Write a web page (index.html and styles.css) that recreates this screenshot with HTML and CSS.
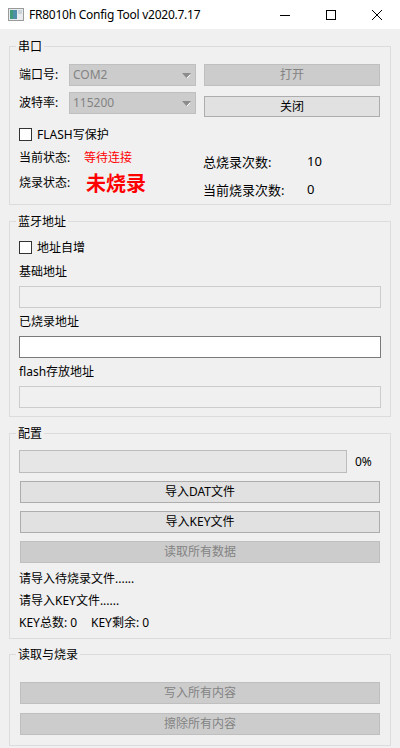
FILE: index.html
```html
<!DOCTYPE html>
<html lang="zh-CN">
<head>
  <meta charset="UTF-8">
  <meta name="viewport" content="width=device-width, initial-scale=1.0">
  <title>FR8010h Config Tool v2020.7.17</title>
  <link rel="stylesheet" href="styles.css">
</head>
<body>
  <div class="titlebar">
    <svg class="app-icon" width="16" height="13" viewBox="0 0 16 13">
      <rect x="0.5" y="0.5" width="15" height="12" fill="#e8ecef" stroke="#9a9a9a"/>
      <rect x="2" y="2" width="7" height="9" fill="#4d8fa8"/>
      <rect x="2" y="2" width="3" height="9" fill="#3f9a7a"/>
      <rect x="10" y="2" width="4" height="4" fill="#c9d3da"/>
    </svg>
    <span class="title">FR8010h Config Tool v2020.7.17</span>
    <div class="win-btns">
      <span class="win-btn">
        <svg width="10" height="10" viewBox="0 0 10 10"><path d="M0 5.5h10" stroke="#000" stroke-width="1"/></svg>
      </span>
      <span class="win-btn">
        <svg width="10" height="10" viewBox="0 0 10 10"><rect x="0.5" y="0.5" width="9" height="9" fill="none" stroke="#000"/></svg>
      </span>
      <span class="win-btn">
        <svg width="10" height="10" viewBox="0 0 10 10"><path d="M0 0L10 10M10 0L0 10" stroke="#000" stroke-width="1"/></svg>
      </span>
    </div>
  </div>

  <div class="main">
    <!-- 串口 -->
    <fieldset class="group g-serial">
      <legend>串口</legend>
      <div class="serial-grid">
        <span class="field-label">端口号:</span>
        <div class="combo">COM2<svg class="arrow" width="9" height="5" viewBox="0 0 9 5"><path d="M0 0h9L4.5 5z" fill="#8c8c8c"/><path d="M5 5L8 2" stroke="#fff" stroke-width="1"/></svg></div>
        <button class="btn btn-side" disabled>打开</button>
        <span class="field-label">波特率:</span>
        <div class="combo">115200<svg class="arrow" width="9" height="5" viewBox="0 0 9 5"><path d="M0 0h9L4.5 5z" fill="#8c8c8c"/><path d="M5 5L8 2" stroke="#fff" stroke-width="1"/></svg></div>
        <button class="btn btn-side btn-close">关闭</button>
      </div>
      <label class="check check-flash"><input type="checkbox"> FLASH写保护</label>
      <div class="status">
        <div class="status-left">
          <div class="st-row st-row1"><span class="st-label">当前状态:</span><span class="st-wait">等待连接</span></div>
          <div class="st-row st-row2"><span class="st-label">烧录状态:</span><span class="st-burn">未烧录</span></div>
        </div>
        <div class="status-right">
          <div class="cnt-row cnt-row1"><span class="cnt-label">总烧录次数:</span><span>10</span></div>
          <div class="cnt-row cnt-row2"><span class="cnt-label">当前烧录次数:</span><span>0</span></div>
        </div>
      </div>
    </fieldset>

    <!-- 蓝牙地址 -->
    <fieldset class="group g-addr">
      <legend>蓝牙地址</legend>
      <label class="check"><input type="checkbox"> 地址自增</label>
      <div class="addr-label first">基础地址</div>
      <input class="text-input" type="text" disabled>
      <div class="addr-label">已烧录地址</div>
      <input class="text-input" type="text">
      <div class="addr-label">flash存放地址</div>
      <input class="text-input" type="text" disabled>
    </fieldset>

    <!-- 配置 -->
    <fieldset class="group g-config">
      <legend>配置</legend>
      <div class="progress-row">
        <div class="progress"></div>
        <span class="percent">0%</span>
      </div>
      <button class="btn wide">导入DAT文件</button>
      <button class="btn wide">导入KEY文件</button>
      <button class="btn wide" disabled>读取所有数据</button>
      <div class="info-lines">
        <div class="info">请导入待烧录文件......</div>
        <div class="info">请导入KEY文件......</div>
        <div class="info"><span class="key-total">KEY总数: 0</span>KEY剩余: 0</div>
      </div>
    </fieldset>

    <!-- 读取与烧录 -->
    <fieldset class="group g-burn">
      <legend>读取与烧录</legend>
      <button class="btn wide" disabled>写入所有内容</button>
      <button class="btn wide btn-erase" disabled>擦除所有内容</button>
    </fieldset>
  </div>
</body>
</html>
```

FILE: styles.css
```css
body {
  margin: 0;
  background: #f0f0f0;
  font-family: "Noto Sans", "Noto Sans CJK SC", sans-serif;
  font-size: 12px;
  color: #000;
}

.titlebar {
  height: 29px;
  background: #fff;
  display: flex;
  align-items: center;
}
.app-icon {
  margin-left: 8px;
  margin-right: 5px;
}
.title {
  font-size: 12px;
  line-height: 29px;
  letter-spacing: -0.25px;
}
.win-btns {
  margin-left: auto;
  display: flex;
}
.win-btn {
  width: 46px;
  height: 29px;
  display: flex;
  align-items: center;
  justify-content: center;
}

.main {
  padding: 0 9px;
}

.group {
  margin: 8px 0 0;
  padding: 0 8px 0 9px;
  border: 1px solid #dcdcdc;
  min-inline-size: 0;
}
.group legend {
  padding: 0 2px;
  margin-left: -3px;
  line-height: 16px;
  font-family: "Noto Sans CJK SC", sans-serif;
}
.g-serial { margin-top: 9px; padding-top: 10px; }
.g-addr { padding-top: 10px; padding-bottom: 8px; }
.g-config { padding-top: 9px; padding-bottom: 4px; }
.g-burn { margin-top: 7px; padding-top: 12px; padding-bottom: 10px; }

.serial-grid {
  display: grid;
  grid-template-columns: 50px 127px 184px;
  row-gap: 6px;
  align-items: start;
}
.field-label {
  line-height: 22px;
}
.combo {
  height: 22px;
  box-sizing: border-box;
  border: 1px solid #bfbfbf;
  background: #cccccc;
  color: #838383;
  padding-left: 3px;
  line-height: 20px;
  display: flex;
  align-items: center;
}
.combo .arrow {
  margin-left: auto;
  margin-right: 4px;
}

.btn {
  display: block;
  height: 22px;
  box-sizing: border-box;
  border: 1px solid #adadad;
  background: #e1e1e1;
  font: inherit;
  color: #000;
  padding: 0;
  line-height: 20px;
}
.btn:disabled {
  border-color: #bfbfbf;
  background: #cccccc;
  color: #838383;
}
.btn-side {
  width: 176px;
  margin-left: 8px;
}
.btn-close {
  margin-top: 4px;
  height: 21px;
}
.btn.wide {
  width: 360px;
  margin: 8px 0 0 1px;
}
.btn-erase {
  margin-top: 9px !important;
}

.check {
  display: flex;
  align-items: center;
  height: 16px;
}
.check input {
  appearance: none;
  width: 13px;
  height: 13px;
  box-sizing: border-box;
  border: 1px solid #333;
  background: #fff;
  margin: 0 5px 0 0;
}
.check-flash {
  margin-top: 9px;
}

.status {
  display: flex;
  height: 62px;
}
.status-left {
  width: 184px;
  padding-top: 5px;
}
.st-row {
  display: flex;
  align-items: center;
}
.st-row1 { height: 20px; }
.st-row2 { height: 30px; }
.st-label {
  width: 65px;
}
.st-wait {
  color: #ff0000;
}
.st-burn {
  color: #ff0000;
  font-size: 20px;
  font-weight: bold;
  margin-left: 2px;
  font-family: "Noto Sans CJK SC", sans-serif;
}
.status-right {
  padding-top: 7px;
  font-size: 13px;
}
.cnt-row {
  display: flex;
  align-items: center;
}
.cnt-row1 { height: 24px; }
.cnt-row2 { height: 32px; }
.cnt-label {
  width: 104px;
}

.addr-label {
  line-height: 20px;
  margin-top: 4px;
}
.addr-label.first {
  margin-top: 7px;
}
.text-input {
  display: block;
  width: 362px;
  height: 22px;
  box-sizing: border-box;
  margin: 4px 0 0;
  border: 1px solid #7a7a7a;
  background: #fff;
  padding: 0;
}
.text-input:disabled {
  border-color: #cccccc;
  background: #f0f0f0;
}

.progress-row {
  display: flex;
  align-items: center;
}
.progress {
  width: 328px;
  height: 23px;
  box-sizing: border-box;
  border: 1px solid #bcbcbc;
  background: #e6e6e6;
}
.percent {
  margin-left: 8px;
}
.info-lines {
  margin-top: 5px;
}
.info {
  line-height: 22px;
}
.key-total {
  display: inline-block;
  width: 72px;
}
```
